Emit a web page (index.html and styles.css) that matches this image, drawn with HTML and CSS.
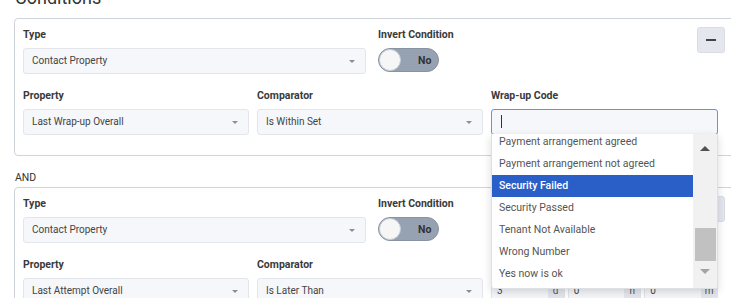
FILE: index.html
```html
<!DOCTYPE html>
<html lang="en">

<head>
  <meta charset="UTF-8">
  <meta name="viewport" content="width=device-width, initial-scale=1.0">
  <title>Conditions</title>
  <link rel="stylesheet" href="styles.css">
</head>

<body>
  <div class="page">
    <h2 class="title">Conditions</h2>

    <!-- condition 1 -->
    <div class="card">
      <div class="row row-top">
        <div class="field field-type">
          <label>Type</label>
          <div class="select">Contact Property<span class="caret"></span></div>
        </div>
        <div class="field">
          <label>Invert Condition</label>
          <div class="toggle"><span class="knob"></span><span class="toggle-text">No</span></div>
        </div>
        <button class="remove"><span></span></button>
      </div>
      <div class="row row-fields">
        <div class="field">
          <label>Property</label>
          <div class="select">Last Wrap-up Overall<span class="caret"></span></div>
        </div>
        <div class="field">
          <label>Comparator</label>
          <div class="select">Is Within Set<span class="caret"></span></div>
        </div>
        <div class="field field-open">
          <label>Wrap-up Code</label>
          <div class="input focused"><span class="cursor"></span></div>
          <div class="dropdown">
            <ul class="options">
              <li>Payment arrangement agreed</li>
              <li>Payment arrangement not agreed</li>
              <li class="active">Security Failed</li>
              <li>Security Passed</li>
              <li>Tenant Not Available</li>
              <li>Wrong Number</li>
              <li>Yes now is ok</li>
            </ul>
            <div class="scrollbar">
              <div class="sb-btn"><span class="arrow-up"></span></div>
              <div class="sb-thumb"></div>
              <div class="sb-btn sb-btn-down"><span class="arrow-down"></span></div>
            </div>
          </div>
        </div>
      </div>
    </div>

    <div class="joiner">AND</div>

    <!-- condition 2 -->
    <div class="card">
      <div class="row row-top">
        <div class="field field-type">
          <label>Type</label>
          <div class="select">Contact Property<span class="caret"></span></div>
        </div>
        <div class="field">
          <label>Invert Condition</label>
          <div class="toggle"><span class="knob"></span><span class="toggle-text">No</span></div>
        </div>
        <button class="remove"><span></span></button>
      </div>
      <div class="row row-fields">
        <div class="field">
          <label>Property</label>
          <div class="select">Last Attempt Overall<span class="caret"></span></div>
        </div>
        <div class="field">
          <label>Comparator</label>
          <div class="select">Is Later Than<span class="caret"></span></div>
        </div>
        <div class="field">
          <label class="label-under">Time Ago</label>
          <div class="duration">
            <div class="dur-group"><span class="dur-input">3</span><span class="dur-unit">d</span></div>
            <div class="dur-group"><span class="dur-input">0</span><span class="dur-unit">h</span></div>
            <div class="dur-group"><span class="dur-input">0</span><span class="dur-unit">m</span></div>
          </div>
        </div>
      </div>
    </div>
  </div>
</body>

</html>
```

FILE: styles.css
```css
* {
  margin: 0;
  padding: 0;
  box-sizing: border-box;
}

ul {
  list-style: none;
}

body {
  background-color: #fff;
  font-family: Roboto, "Liberation Sans", sans-serif;
  color: #333;
  overflow: hidden;
}

.page {
  width: 738px;
  padding-left: 14px;
}

.title {
  font-size: 18px;
  font-weight: 400;
  line-height: 22px;
  color: #333;
  margin-top: -13px;
  margin-left: 1px;
  margin-bottom: 9px;
}

/* condition card */
.card {
  border: 1px solid #cfd4da;
  border-radius: 4px;
  padding: 9px 12px 20px 8px;
}

.row-top {
  display: flex;
  align-items: flex-start;
  gap: 12px;
}

.row-fields {
  display: grid;
  grid-template-columns: 226px 226px 227px;
  column-gap: 8px;
  margin-top: 15px;
}

.field {
  position: relative;
}

.field-type {
  width: 343px;
}

.field label {
  display: block;
  font-size: 10.5px;
  font-weight: 700;
  line-height: 14px;
  color: #3a3a3a;
  margin-bottom: 6px;
}

/* label of the second card that sits under the open list */
.field .label-under {
  padding-left: 4px;
}

.select,
.input {
  position: relative;
  height: 26px;
  line-height: 24px;
  padding-left: 8px;
  font-size: 10px;
  color: #444;
  background-color: #f5f7fa;
  border: 1px solid #e2e6eb;
  border-radius: 3px;
}

.caret {
  position: absolute;
  right: 10px;
  top: 11px;
  border-left: 3px solid transparent;
  border-right: 3px solid transparent;
  border-top: 3px solid #8a8f96;
}

.input.focused {
  border-color: #6b92dc;
  padding-left: 9px;
  padding-top: 5px;
}

.cursor {
  display: block;
  width: 1px;
  height: 13px;
  background-color: #333;
}

/* toggle */
.toggle {
  display: flex;
  align-items: center;
  width: 61px;
  height: 24px;
  background-color: #96a2b2;
  border: 1px solid #8793a3;
  border-radius: 12px;
}

.knob {
  width: 22px;
  height: 22px;
  border-radius: 50%;
  background-color: #f6f6f6;
  border: 1px solid #c9ced5;
}

.toggle-text {
  margin-left: 17px;
  font-size: 10.5px;
  font-weight: 700;
  color: #333;
}

.remove {
  margin-left: auto;
  margin-top: -1px;
  width: 28px;
  height: 26px;
  background-color: #e4e8ee;
  border: 1px solid #d8dde3;
  border-radius: 3px;
  display: flex;
  align-items: center;
  justify-content: center;
  cursor: pointer;
}

.remove span {
  display: block;
  width: 10px;
  height: 2px;
  background-color: #3b4450;
}

.joiner {
  margin: 15px 0 2px 1px;
  font-size: 10.5px;
  line-height: 14px;
  color: #333;
}

/* open dropdown of wrap-up codes */
.dropdown {
  position: absolute;
  left: 0;
  right: 0;
  top: 45px;
  height: 155px;
  z-index: 10;
  display: flex;
  background-color: #fff;
  border: 1px solid #dcdfe3;
  border-top: none;
  border-radius: 0 0 3px 3px;
  box-shadow: 0 3px 8px rgba(0, 0, 0, 0.15);
  overflow: hidden;
}

.options {
  flex: 1;
  margin-top: -3px;
}

.options li {
  height: 22px;
  line-height: 21px;
  padding-left: 7px;
  font-size: 10.5px;
  color: #555;
  white-space: nowrap;
}

.options li.active {
  background-color: #2b5fc8;
  color: #fff;
  font-weight: 500;
}

.scrollbar {
  width: 24px;
  background-color: #f1f1f1;
  display: flex;
  flex-direction: column;
  align-items: center;
}

.sb-btn {
  height: 29px;
  width: 100%;
  display: flex;
  align-items: center;
  justify-content: center;
}

.sb-btn-down {
  height: 20px;
}

.arrow-up {
  border-left: 5px solid transparent;
  border-right: 5px solid transparent;
  border-bottom: 5px solid #505050;
}

.arrow-down {
  border-left: 5px solid transparent;
  border-right: 5px solid transparent;
  border-top: 5px solid #a3a3a3;
}

.sb-thumb {
  width: 21px;
  height: 33px;
  margin-top: 65px;
  background-color: #c1c1c1;
}

/* duration inputs */
.duration {
  display: flex;
  gap: 3px;
}

.dur-group {
  flex: 1;
  display: flex;
  height: 26px;
  border: 1px solid #e2e6eb;
  border-radius: 3px;
  overflow: hidden;
}

.dur-input {
  flex: 1;
  padding-left: 5px;
  line-height: 24px;
  font-size: 10px;
  color: #444;
  background-color: #f5f7fa;
}

.dur-unit {
  width: 16px;
  text-align: center;
  line-height: 24px;
  font-size: 10px;
  color: #555;
  background-color: #e4e8ee;
}
```
